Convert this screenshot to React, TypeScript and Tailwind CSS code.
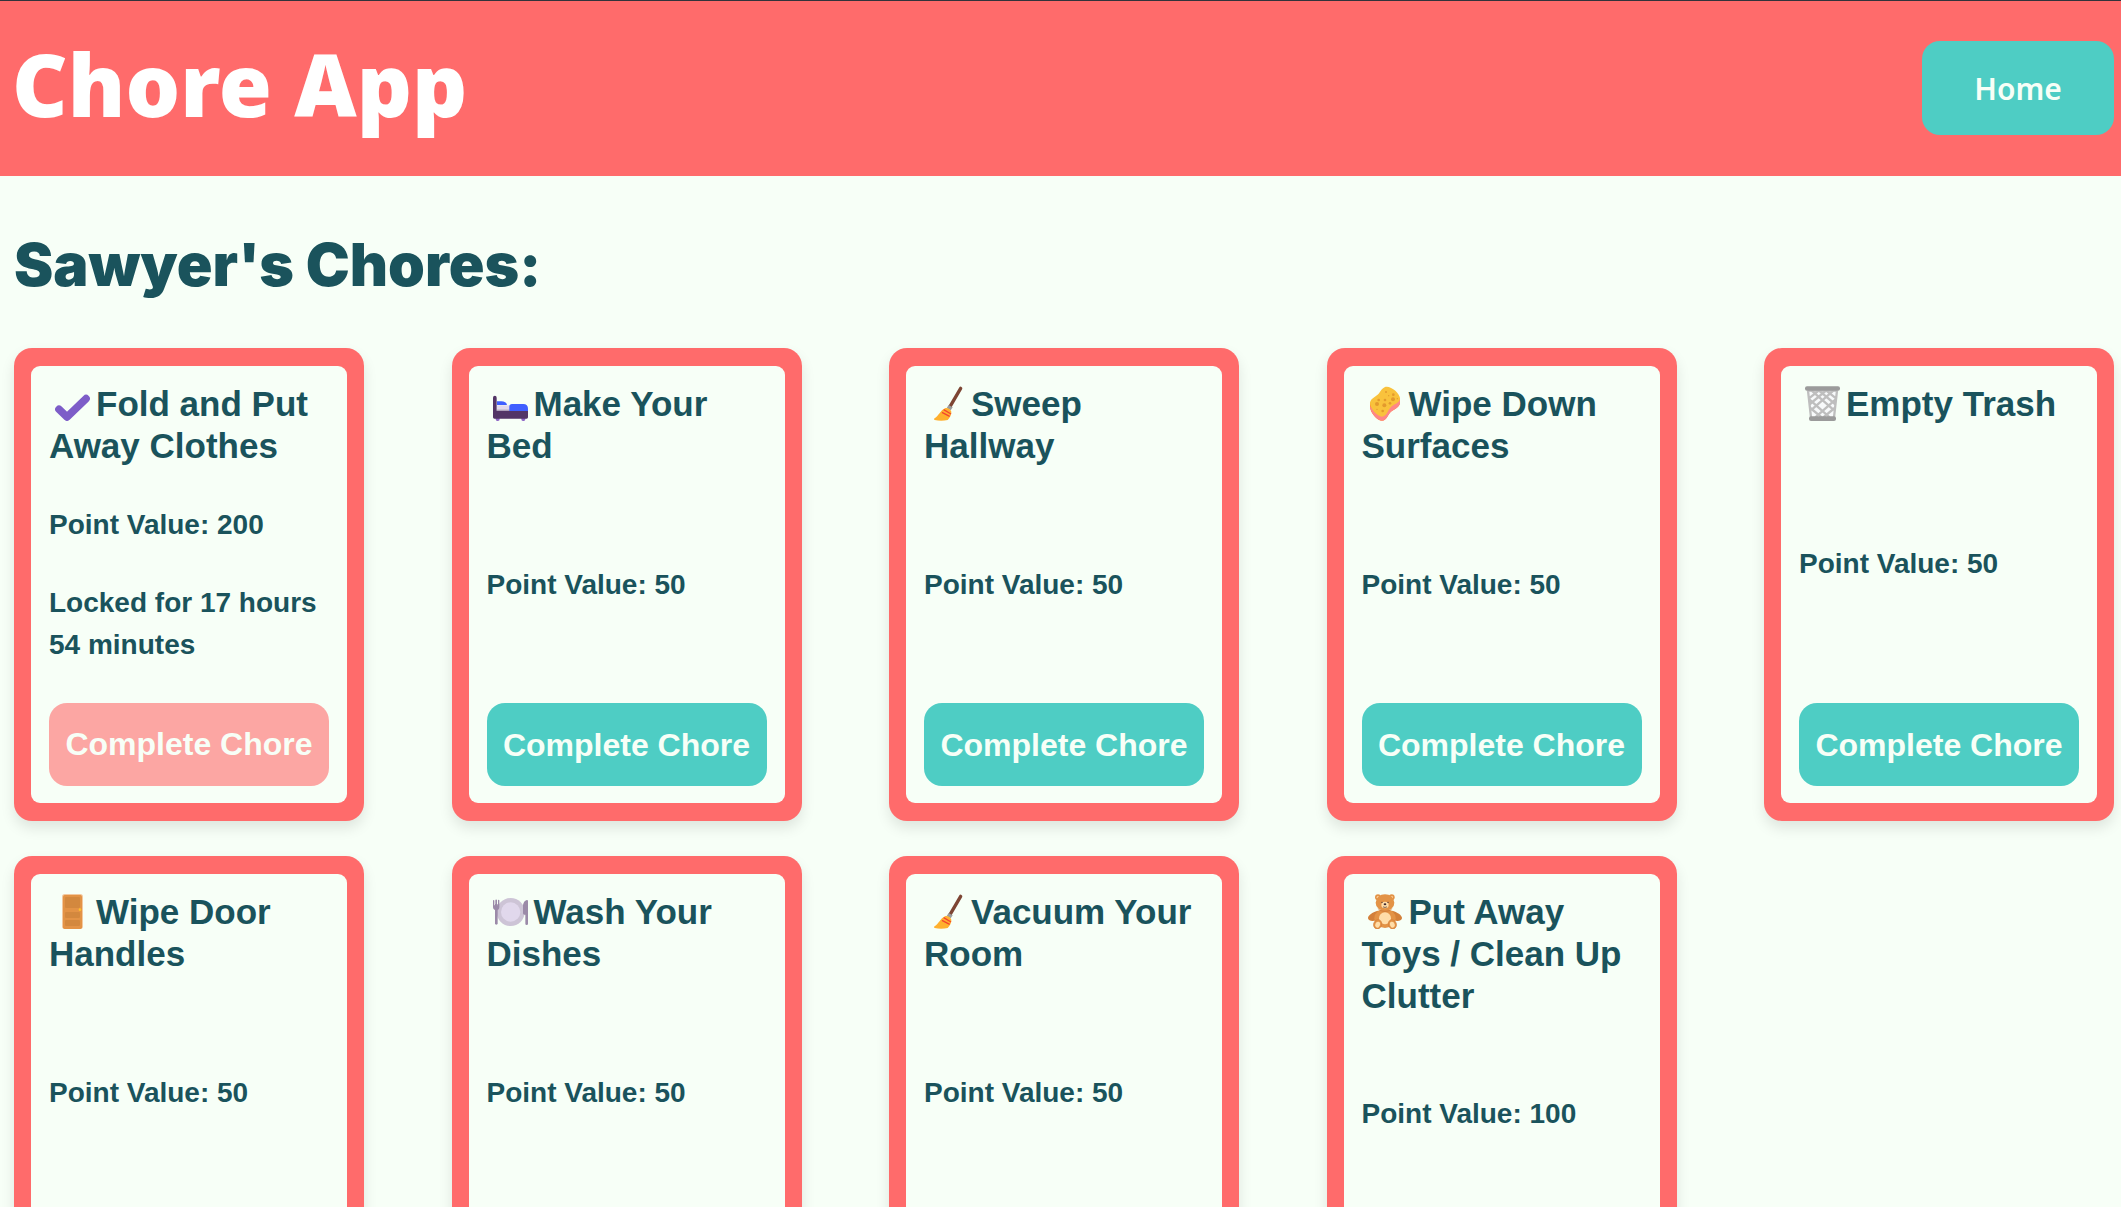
import type { ReactNode } from "react";

const FONT = "font-['Liberation_Sans',Arial,sans-serif]";

function Icon({ box, children }: { box: string; children: ReactNode }) {
  return (
    <svg viewBox={box} aria-hidden="true" className="mx-[6px] inline-block size-[35px] align-[-5px]">
      {children}
    </svg>
  );
}

const CheckIcon = () => (
  <Icon box="0 0 105 105">
    <path d="M12 70 L36 93 L93 38" fill="none" stroke="#7D5DC8" strokeWidth="23" strokeLinecap="round" strokeLinejoin="round" />
  </Icon>
);

const BedIcon = () => (
  <Icon box="0 0 105 105">
    <path d="M8 94h12v6a5 5 0 0 1-5 5h-2a5 5 0 0 1-5-5zM85 94h12v6a5 5 0 0 1-5 5h-2a5 5 0 0 1-5-5z" fill="#8D65C5" />
    <path d="M12 58h42v22H12z" fill="#E1D8EC" />
    <path d="M12 69h42v12H12z" fill="#CDC4D6" />
    <path d="M12 46h13c9 0 16 4 17 11H12z" fill="#3F5FFF" />
    <path d="M0 35a5 5 0 0 1 11 0v39h94v20a4 4 0 0 1-4 4H4a4 4 0 0 1-4-4z" fill="#533566" />
    <path d="M49 62a8 8 0 0 1 8-8h34c9 0 14 5 14 14v7H49z" fill="#3F5FFF" />
  </Icon>
);

const BroomIcon = () => (
  <Icon box="0 0 105 105">
    <path d="M92 7 L60 62" stroke="#7D4533" strokeWidth="10" strokeLinecap="round" />
    <path d="M56 57l12 7-6 9-12-7z" fill="#9B9B9B" />
    <path d="M45 67c7-3 17 3 19 10 1 8-5 19-11 25-12 3-27 3-39 0-3-1-2-4 0-5 12-7 17-24 31-30z" fill="#FFB02E" />
    <path d="M41 71l22 13M36 79l23 12" stroke="#F3452F" strokeWidth="4" />
  </Icon>
);

const SpongeIcon = () => (
  <Icon box="0 0 105 105">
    <path d="M6 62c0 18 22 42 36 42 14-1 16-15 24-24 9-10 29-15 30-30V35L6 50z" fill="#FF822D" />
    <path d="M6 60c0 20 22 44 36 44 14-1 16-15 24-24 9-10 29-15 30-30V38L30 82z" fill="#FF8687" />
    <path d="M51 3c16-6 47 20 45 36-2 13-21 16-29 26-8 9-11 25-25 27C28 92 5 67 6 50c2-14 18-18 26-27 6-7 10-17 19-20z" fill="#F9C23C" />
    <g fill="#E39A2D">
      <circle cx="75" cy="40" r="6" />
      <circle cx="49" cy="58" r="6" />
      <circle cx="51" cy="42" r="4" />
      <circle cx="27" cy="54" r="6" />
      <circle cx="66" cy="52" r="4" />
      <circle cx="32" cy="42" r="4" />
      <circle cx="44" cy="75" r="4" />
      <circle cx="76" cy="26" r="4" />
      <circle cx="54" cy="18" r="3" />
      <circle cx="27" cy="70" r="2" />
      <circle cx="62" cy="29" r="2" />
      <circle cx="88" cy="38" r="2" />
    </g>
  </Icon>
);

const TrashIcon = () => (
  <Icon box="0 0 105 105">
    <path d="M6 12h93L88 94H17z" fill="#F8FAFB" />
    <path
      d="M9 14l9 80M96 14l-9 80M20 14L84 70M42 14L90 54M64 14L94 38M13 40L74 94M16 66L50 94M85 14L21 70M63 14L15 54M41 14L11 38M92 40L31 94M89 66L55 94"
      fill="none"
      stroke="#BEBEBE"
      strokeWidth="7"
    />
    <path d="M8 15h89" stroke="#BEBEBE" strokeWidth="5" />
    <rect x="0" y="1" width="105" height="13" rx="6" fill="#9B9B9B" />
    <rect x="12" y="91" width="81" height="14" rx="6" fill="#9B9B9B" />
  </Icon>
);

const DoorIcon = () => (
  <Icon box="0 0 105 105">
    <rect x="21" y="0" width="63" height="105" rx="8" fill="#F3C9A0" />
    <rect x="24" y="3" width="57" height="102" rx="5" fill="#E39346" />
    <rect x="30" y="9" width="45" height="33" rx="4" fill="#D3883E" />
    <rect x="30" y="54" width="45" height="18" rx="4" fill="#D3883E" />
    <rect x="30" y="78" width="45" height="18" rx="4" fill="#D3883E" />
    <circle cx="75" cy="47" r="4" fill="#FFC02E" />
  </Icon>
);

const PlateIcon = () => (
  <Icon box="0 0 105 105">
    <circle cx="53" cy="54" r="42" fill="#CDC4D6" />
    <circle cx="53" cy="54" r="29" fill="#E1D8EC" />
    <path d="M6 30v58a4 4 0 0 0 8 0V30z" fill="#9B8AA8" />
    <path d="M0 20a2 2 0 0 1 4 0v14h3V19a2 2 0 0 1 5 0v15h3V19a2 2 0 0 1 4 0v21c0 6-4 9-9 9s-10-3-10-9z" fill="#9B8AA8" />
    <path d="M105 21v68a4 4 0 0 1-8 0V62h-3a4 4 0 0 1-4-4V37c0-10 5-18 12-19a3 3 0 0 1 3 3z" fill="#9B8AA8" />
  </Icon>
);

const BearIcon = () => (
  <Icon box="0 0 105 105">
    <circle cx="30" cy="10" r="9" fill="#E39346" />
    <circle cx="71" cy="10" r="9" fill="#E39346" />
    <circle cx="30" cy="10" r="4" fill="#FCD09A" />
    <circle cx="71" cy="10" r="4" fill="#FCD09A" />
    <path d="M30 50C14 54-1 64 0 73c2 9 14 10 26 6h50c12 4 24 3 26-6 1-9-14-19-30-23z" fill="#D3803A" />
    <ellipse cx="51" cy="73" rx="32" ry="29" fill="#E39346" />
    <ellipse cx="51" cy="73" rx="18" ry="18" fill="#FFDDA8" />
    <ellipse cx="51" cy="26" rx="28" ry="25" fill="#E39346" />
    <path d="M28 41c8 12 38 12 46 0-7 17-39 17-46 0z" fill="#D3803A" />
    <ellipse cx="51" cy="33" rx="11" ry="10" fill="#FFDDA8" />
    <ellipse cx="51" cy="31" rx="4" ry="3" fill="#402A32" />
    <path d="M45 38c3 3 9 3 12 0" stroke="#402A32" strokeWidth="2" fill="none" />
    <circle cx="42" cy="25" r="2" fill="#402A32" />
    <circle cx="60" cy="25" r="2" fill="#402A32" />
    <ellipse cx="29" cy="91" rx="12" ry="14" transform="rotate(20 29 91)" fill="#E39346" stroke="#D3803A" strokeWidth="2" />
    <ellipse cx="73" cy="91" rx="12" ry="14" transform="rotate(-20 73 91)" fill="#E39346" stroke="#D3803A" strokeWidth="2" />
    <ellipse cx="29" cy="92" rx="7" ry="9" transform="rotate(20 29 92)" fill="#FFDDA8" />
    <ellipse cx="73" cy="92" rx="7" ry="9" transform="rotate(-20 73 92)" fill="#FFDDA8" />
  </Icon>
);

type Chore = { name: string; points: number; icon: () => ReactNode; locked?: string };

const chores: Chore[] = [
  { name: "Fold and Put Away Clothes", points: 200, icon: CheckIcon, locked: "Locked for 17 hours 54 minutes" },
  { name: "Make Your Bed", points: 50, icon: BedIcon },
  { name: "Sweep Hallway", points: 50, icon: BroomIcon },
  { name: "Wipe Down Surfaces", points: 50, icon: SpongeIcon },
  { name: "Empty Trash", points: 50, icon: TrashIcon },
  { name: "Wipe Door Handles", points: 50, icon: DoorIcon },
  { name: "Wash Your Dishes", points: 50, icon: PlateIcon },
  { name: "Vacuum Your Room", points: 50, icon: BroomIcon },
  { name: "Put Away Toys / Clean Up Clutter", points: 100, icon: BearIcon },
];

function ChoreCard({ chore }: { chore: Chore }) {
  const ChoreIcon = chore.icon;
  return (
    <li className="flex min-h-[473px] rounded-[18px] bg-[#ff6b6b] px-[17px] py-[18px] shadow-[0_7px_14px_rgba(0,0,0,0.1)]">
      <div className="flex flex-1 flex-col justify-between rounded-[9px] bg-[#f7fff7] px-[18px] py-[17px]">
        <h3 className="text-[35px] leading-[42px] font-bold">
          <ChoreIcon />
          {chore.name}
        </h3>
        <p className="text-[28px] leading-[42px] font-bold">Point Value: {chore.points}</p>
        {chore.locked && <p className="text-[28px] leading-[42px] font-bold">{chore.locked}</p>}
        <button
          type="button"
          disabled={!!chore.locked}
          className="h-[83px] rounded-[18px] bg-[#4ecdc4] text-[32px] font-bold whitespace-nowrap text-[#f7fff7] disabled:bg-[#fca6a3]"
        >
          Complete Chore
        </button>
      </div>
    </li>
  );
}

export default function App() {
  return (
    <div className={`min-h-screen bg-[#f7fff7] pb-9 text-[#1a535c] ${FONT}`}>
      <header className="flex items-center justify-between border-t border-[#33333b] bg-[#ff6b6b] pt-10 pr-[7px] pb-[41px] pl-3 font-['Noto_Sans',sans-serif]">
        <h1 className="pb-[8px] text-[86px] leading-[80px] font-black text-white">Chore App</h1>
        <a href="#home" className="flex h-[94px] w-48 items-center justify-center rounded-[18px] bg-[#4ecdc4] pt-px text-[30px] font-semibold text-[#f7fff7]">
          Home
        </a>
      </header>
      <main className="pr-[7px] pl-[14px]">
        <h2 className="pt-[54px] pb-[48px] font-['Inter',sans-serif] text-[59px] leading-[70px] font-black">Sawyer's Chores:</h2>
        <ul className="grid grid-cols-[repeat(auto-fill,350px)] justify-between gap-x-10 gap-y-[35px]">
          {chores.map((chore) => (
            <ChoreCard key={chore.name} chore={chore} />
          ))}
        </ul>
      </main>
    </div>
  );
}
